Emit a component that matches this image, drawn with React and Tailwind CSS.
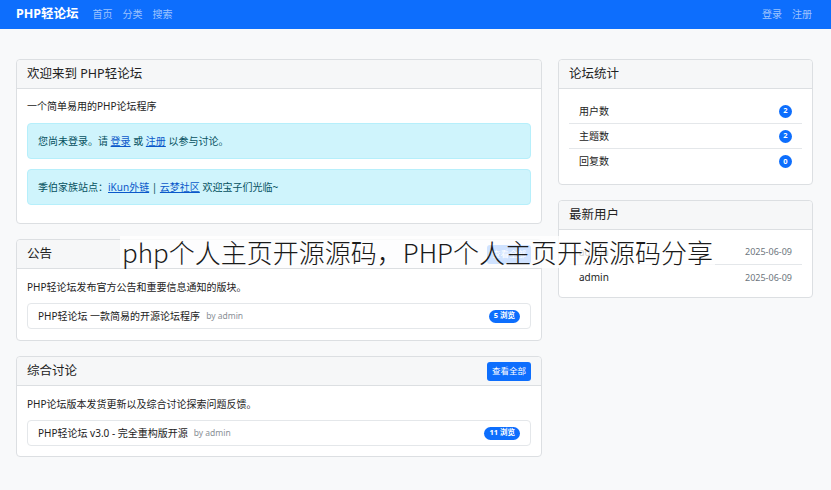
const FONT = { fontFamily: '"Noto Sans", "Noto Sans CJK SC", sans-serif' };

function Card({ title, action, children, className = '' }) {
    return (
        <div className={`bg-white border border-[#dcdfe2] rounded-[4px] ${className}`}>
            <div className="h-[29px] px-[10px] flex items-center justify-between bg-[#f6f7f8] border-b border-[#dcdfe2] rounded-t-[4px]">
                <span className="text-[12.5px] text-[#222]">{title}</span>
                {action}
            </div>
            {children}
        </div>
    );
}

function ViewAll() {
    return (
        <button className="h-[19px] px-[5px] rounded-[3px] bg-[#0d6efd] text-white text-[8.5px]">查看全部</button>
    );
}

function TopicRow({ title, count }) {
    return (
        <div className="h-[26px] mx-[10px] px-[10px] flex items-center justify-between border border-[#e4e7ea] rounded-[4px]">
            <div className="flex items-center gap-[6px]">
                <span className="text-[10px] text-[#222]">{title}</span>
                <span className="text-[8.5px] text-[#8a9096]">by admin</span>
            </div>
            <span className="h-[13px] px-[5px] rounded-full bg-[#0d6efd] text-white text-[7.5px] font-bold flex items-center">{count} 浏览</span>
        </div>
    );
}

function StatRow({ label, value, last }) {
    return (
        <div className={`h-[25px] mx-[10px] px-[10px] flex items-center justify-between ${last ? '' : 'border-b border-[#e4e7ea]'}`}>
            <span className="text-[10px] text-[#222]">{label}</span>
            <span className="w-[13px] h-[13px] rounded-full bg-[#0d6efd] text-white text-[7.5px] font-bold flex items-center justify-center">{value}</span>
        </div>
    );
}

function UserRow({ name, date, last }) {
    return (
        <div className={`h-[25px] mx-[10px] px-[10px] flex items-center justify-between ${last ? '' : 'border-b border-[#e4e7ea]'}`}>
            <span className="text-[10px] text-[#222]">{name}</span>
            <span className="text-[9px] text-[#6c757d]">{date}</span>
        </div>
    );
}

export default function App() {
    return (
        <div className="relative min-h-[490px] bg-[#f8f9fa]" style={FONT}>
            {/* 导航 */}
            <nav className="h-[29px] bg-[#0d6efd] px-[16px] flex items-center justify-between">
                <div className="flex items-center">
                    <span className="text-[12.5px] font-bold text-white">PHP轻论坛</span>
                    <div className="flex gap-[10px] ml-[14px] text-[10px] text-white/60">
                        <span>首页</span>
                        <span>分类</span>
                        <span>搜索</span>
                    </div>
                </div>
                <div className="flex gap-[10px] mr-[3px] text-[10px] text-white/60">
                    <span>登录</span>
                    <span>注册</span>
                </div>
            </nav>

            <div className="flex gap-[16px] pl-[16px] pt-[30px]">
                {/* 左栏 */}
                <div className="w-[526px] flex flex-col gap-[15px]">
                    <Card title="欢迎来到 PHP轻论坛">
                        <div className="px-[10px] pt-[10px] pb-[18px]">
                            <p className="text-[10px] text-[#222] mb-[9px]">一个简单易用的PHP论坛程序</p>
                            <div className="h-[36px] px-[10px] mb-[10px] flex items-center bg-[#cff4fc] border border-[#b6effb] rounded-[4px] text-[10px] text-[#055160]">
                                您尚未登录。请&nbsp;<a className="underline text-[#0a58ca]">登录</a>&nbsp;或&nbsp;<a className="underline text-[#0a58ca]">注册</a>&nbsp;以参与讨论。
                            </div>
                            <div className="h-[36px] px-[10px] flex items-center bg-[#cff4fc] border border-[#b6effb] rounded-[4px] text-[10px] text-[#055160]">
                                季伯家族站点：<a className="underline text-[#0a58ca]">iKun外链</a>&nbsp;|&nbsp;<a className="underline text-[#0a58ca]">云梦社区</a>&nbsp;欢迎宝子们光临~
                            </div>
                        </div>
                    </Card>

                    <Card title="公告" action={<ViewAll />}>
                        <div className="pt-[11px] pb-[11px]">
                            <p className="px-[10px] text-[10px] text-[#222] mb-[8px]">PHP轻论坛发布官方公告和重要信息通知的版块。</p>
                            <TopicRow title="PHP轻论坛 一款简易的开源论坛程序" count={5} />
                        </div>
                    </Card>

                    <Card title="综合讨论" action={<ViewAll />}>
                        <div className="pt-[11px] pb-[10px]">
                            <p className="px-[10px] text-[10px] text-[#222] mb-[8px]">PHP论坛版本发货更新以及综合讨论探索问题反馈。</p>
                            <TopicRow title="PHP轻论坛 v3.0 - 完全重构版开源" count={11} />
                        </div>
                    </Card>
                </div>

                {/* 右栏 */}
                <div className="w-[255px] flex flex-col gap-[15px]">
                    <Card title="论坛统计">
                        <div className="py-[10px]">
                            <StatRow label="用户数" value={2} />
                            <StatRow label="主题数" value={2} />
                            <StatRow label="回复数" value={0} last />
                        </div>
                    </Card>

                    <Card title="最新用户">
                        <div className="pt-[10px] pb-[7px]">
                            <UserRow name="admin" date="2025-06-09" />
                            <UserRow name="admin" date="2025-06-09" last />
                        </div>
                    </Card>
                </div>
            </div>

            {/* 叠加标题 */}
            <div
                className="absolute left-[120px] top-[236px] px-[2px] bg-white/80 text-[26px] font-light text-[#1a1a1a] leading-[32px] whitespace-nowrap"
                style={{ fontFamily: '"Noto Sans CJK SC", "Noto Sans", sans-serif' }}
            >
                php个人主页开源源码，PHP个人主页开源源码分享
            </div>
        </div>
    );
}
